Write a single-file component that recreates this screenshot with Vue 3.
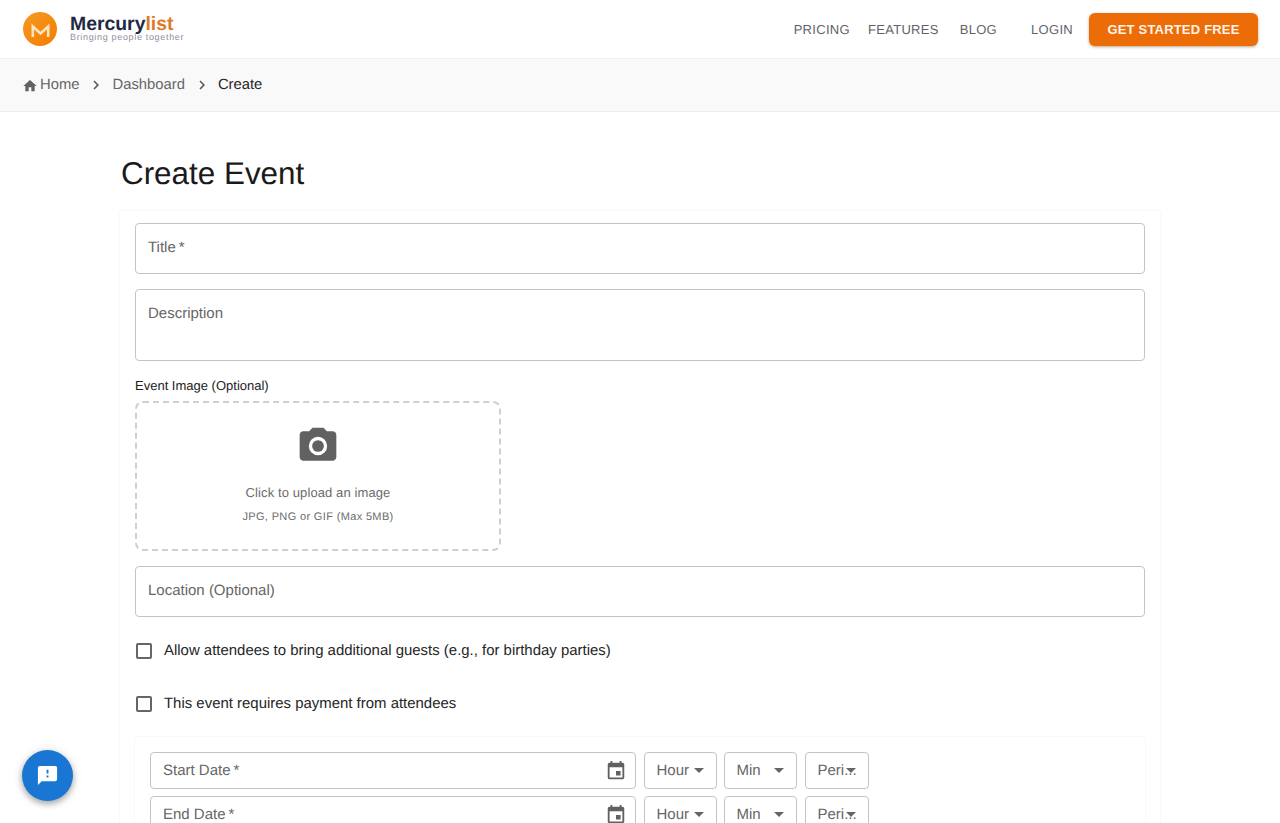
<script setup>
const nav = ['PRICING', 'FEATURES', 'BLOG']
const rows = ['Start Date', 'End Date']
const selects = [
  { label: 'Hour', cls: 'hour' },
  { label: 'Min', cls: 'min' },
  { label: 'Peri...', cls: 'peri' }
]
</script>

<template>
  <div class="page">
    <header class="topbar">
      <div class="brand">
        <svg class="logo" viewBox="0 0 34 34" width="34" height="34">
          <defs>
            <linearGradient id="lg" x1="0" y1="0" x2="1" y2="1">
              <stop offset="0" stop-color="#f59a23" />
              <stop offset="1" stop-color="#f57c00" />
            </linearGradient>
          </defs>
          <circle cx="17" cy="17" r="17" fill="url(#lg)" />
          <path d="M9.800 25V14.500L17.500 21.500L25.200 14.500V25" fill="none" stroke="#ffe3bd" stroke-width="2.600" stroke-linejoin="miter" />
        </svg>
        <div class="brand-text">
          <div class="brand-name">Mercury<span>list</span></div>
          <div class="brand-tag">Bringing people together</div>
        </div>
      </div>
      <nav class="nav">
        <a v-for="n in nav" :key="n" class="nav-link" :class="n.toLowerCase()">{{ n }}</a>
        <a class="nav-link login">LOGIN</a>
        <button class="cta">GET STARTED FREE</button>
      </nav>
    </header>

    <div class="crumbs">
      <svg class="home" viewBox="0 0 24 24" width="16" height="16"><path d="M10 20v-6h4v6h5v-8h3L12 3 2 12h3v8z" fill="#616161" /></svg>
      <span class="crumb first">Home</span>
      <svg class="chev" viewBox="0 0 24 24" width="18" height="18"><path d="M10 6 8.590 7.410 13.170 12l-4.580 4.590L10 18l6-6z" fill="#555" /></svg>
      <span class="crumb">Dashboard</span>
      <svg class="chev" viewBox="0 0 24 24" width="18" height="18"><path d="M10 6 8.590 7.410 13.170 12l-4.580 4.590L10 18l6-6z" fill="#555" /></svg>
      <span class="crumb current">Create</span>
    </div>

    <main class="main">
      <h1 class="title">Create Event</h1>
      <section class="card">
        <div class="field title-field"><span>Title&thinsp;*</span></div>
        <div class="field desc-field"><span>Description</span></div>

        <div class="img-label">Event Image (Optional)</div>
        <div class="upload">
          <svg class="camera" viewBox="0 0 24 24" width="44" height="44">
            <path fill="#616161" fill-rule="evenodd" d="M9 2 7.170 4H4C2.900 4 2 4.900 2 6v12c0 1.100.9 2 2 2h16c1.100 0 2-.9 2-2V6c0-1.100-.9-2-2-2h-3.170L15 2H9zM12 17a5 5 0 1 1 0-10 5 5 0 0 1 0 10z" />
            <circle cx="12" cy="12" r="3.200" fill="#616161" />
          </svg>
          <div class="up-main">Click to upload an image</div>
          <div class="up-sub">JPG, PNG or GIF (Max 5MB)</div>
        </div>

        <div class="field loc-field"><span>Location (Optional)</span></div>

        <label class="check first-check"><i class="box"></i>Allow attendees to bring additional guests (e.g., for birthday parties)</label>
        <label class="check second-check"><i class="box"></i>This event requires payment from attendees</label>

        <div class="dates">
          <div v-for="r in rows" :key="r" class="date-row">
            <div class="date-field">
              <span>{{ r }}&thinsp;*</span>
              <svg viewBox="0 0 24 24" width="22" height="22"><path fill="#616161" d="M17 12h-5v5h5v-5zM16 1v2H8V1H6v2H5c-1.110 0-1.990.9-1.990 2L3 19a2 2 0 0 0 2 2h14c1.100 0 2-.9 2-2V5c0-1.100-.9-2-2-2h-1V1h-2zm3 18H5V8h14v11z" /></svg>
            </div>
            <div v-for="s in selects" :key="s.cls" class="select" :class="s.cls">
              <span>{{ s.label }}</span>
              <i class="caret"></i>
            </div>
          </div>
        </div>
      </section>
    </main>

    <button class="fab" aria-label="Feedback">
      <svg viewBox="0 0 24 24" width="23" height="23"><path fill="#fff" d="M20 2H4c-1.100 0-1.990.9-1.990 2L2 22l4-4h14c1.100 0 2-.9 2-2V4c0-1.100-.9-2-2-2zm-7 12h-2v-2h2v2zm0-4h-2V6h2v4z" /></svg>
    </button>
  </div>
</template>

<style>
html, body { margin: 0; background: #fff; }
</style>

<style scoped>
.page {
  position: relative;
  height: 823px;
  overflow: hidden;
  background: #fff;
  font-family: "Liberation Sans", Arial, sans-serif;
  color: #1c1c1c;
  text-rendering: geometricPrecision;
}
.topbar {
  height: 58px;
  box-sizing: border-box;
  display: flex;
  align-items: center;
  justify-content: space-between;
  padding: 0 22px 0 23px;
  background: #fff;
}
.brand { display: flex; align-items: center; gap: 13px; }
.logo { display: block; }
.brand-text { margin-top: -3px; }
.brand-name { font-size: 19.400px; font-weight: 700; line-height: 22px; color: #1f2a44; }
.brand-name span { color: #dd7a2a; }
.brand-tag { font-size: 9px; line-height: 9px; letter-spacing: 0.670px; color: #8b90a0; margin-top: -2px; }
.nav { display: flex; align-items: center; }
.nav-link { font-size: 13px; letter-spacing: 0.300px; color: #5f6368; }
.pricing { margin-right: 18px; }
.features { margin-right: 21px; }
.blog { margin-right: 34px; }
.login { margin-right: 16px; }
.cta {
  width: 169px;
  height: 33px;
  border: 0;
  border-radius: 6px;
  background: #ec6c08;
  color: #fff3e6;
  font: 700 13px "Liberation Sans", Arial, sans-serif;
  letter-spacing: 0.200px;
  box-shadow: 0 1px 3px rgba(120, 60, 0, 0.45);
  padding: 0;
}
.crumbs {
  height: 54px;
  box-sizing: border-box;
  display: flex;
  align-items: center;
  padding: 0 0 1px 22px;
  background: #f9f9f9;
  border-top: 1px solid #f0f0f0;
  border-bottom: 1px solid #eeeeee;
}
.home { margin-right: 2px; margin-top: 2px; }
.crumb { font-size: 14.800px; color: #666; }
.current { color: #262626; }
.chev { margin: 1px 7px 0 8px; }
.main { padding: 0 120px; }
.title {
  margin: 0;
  padding-top: 44px;
  height: 55px;
  font-size: 31.400px;
  line-height: 36px;
  font-weight: 400;
  color: #1a1a1a;
  padding-left: 1px;
}
.card {
  padding: 12px 15px 0;
  height: 640px;
  box-sizing: border-box;
  box-shadow: 0 0 2px rgba(0, 0, 0, 0.08);
}
.field {
  box-sizing: border-box;
  border: 1px solid #c4c4c4;
  border-radius: 4px;
  padding: 0 0 2px 12px;
  font-size: 15px;
  color: #666;
  display: flex;
  align-items: center;
}
.title-field { height: 51px; }
.desc-field { height: 72px; margin-top: 15px; align-items: flex-start; padding-top: 15px; }
.img-label { font-size: 13px; line-height: 16px; margin-top: 17px; color: #222; }
.upload {
  box-sizing: border-box;
  width: 366px;
  height: 150px;
  margin-top: 7px;
  border: 2px dashed #cfcfcf;
  border-radius: 8px;
  display: flex;
  flex-direction: column;
  align-items: center;
}
.camera { margin-top: 21px; display: block; }
.up-main { font-size: 13px; line-height: 16px; color: #6b6b6b; margin-top: 17px; letter-spacing: 0.100px; }
.up-sub { font-size: 11px; line-height: 14px; color: #6b6b6b; margin-top: 9px; letter-spacing: 0.350px; }
.loc-field { height: 51px; margin-top: 15px; }
.check {
  display: flex;
  align-items: center;
  font-size: 14.950px;
  line-height: 18px;
  color: #262626;
}
.first-check { margin-top: 25px; }
.second-check { margin-top: 35px; }
.box {
  box-sizing: border-box;
  width: 16px;
  height: 16px;
  border: 2px solid #666;
  border-radius: 2px;
  margin-right: 12px;
  margin-left: 1px;
}
.dates {
  margin-top: 24px;
  padding: 15px 15px 0;
  height: 120px;
  box-sizing: border-box;
  box-shadow: 0 0 2px rgba(0, 0, 0, 0.08);
  display: flex;
  flex-direction: column;
  gap: 7px;
}
.date-row { display: flex; flex: none; }
.date-field, .select {
  box-sizing: border-box;
  height: 37px;
  border: 1px solid #c4c4c4;
  border-radius: 4px;
  font-size: 15px;
  color: #666;
  display: flex;
  align-items: center;
  position: relative;
}
.date-field { width: 486px; padding: 0 8px 0 12px; justify-content: space-between; }
.select { padding: 0 0 0 11.500px; margin-left: 8px; }
.hour { width: 73px; }
.min { width: 73px; margin-left: 7px; }
.peri { width: 64px; }
.caret {
  position: absolute;
  right: 12px;
  top: 15px;
  width: 0;
  height: 0;
  border-left: 5px solid transparent;
  border-right: 5px solid transparent;
  border-top: 5px solid #666;
}
.fab {
  position: fixed;
  left: 22px;
  top: 750px;
  width: 51px;
  height: 51px;
  border: 0;
  border-radius: 50%;
  background: #1976d2;
  box-shadow: 0 3px 6px rgba(0, 0, 0, 0.3), 0 1px 12px rgba(0, 0, 0, 0.12);
  display: flex;
  align-items: center;
  justify-content: center;
  padding: 0;
}
</style>
